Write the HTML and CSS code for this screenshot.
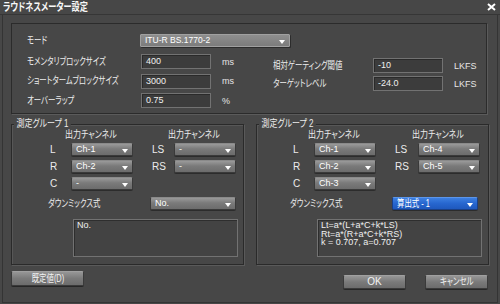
FILE: index.html
```html
<!DOCTYPE html>
<html lang="ja">
<head>
<meta charset="utf-8">
<title>ラウドネスメーター設定</title>
<link rel="stylesheet" href="styles.css">
</head>
<body>
<div class="window">
  <div class="titlebar">
    <span class="title jp">ラウドネスメーター設定</span>
    <svg class="close" width="9" height="8" viewBox="0 0 9 8"><path d="M1 1 L8 7 M8 1 L1 7" stroke="#ffffff" stroke-width="2" fill="none"/></svg>
  </div>
  <div class="body">
    <div class="top">
      <div class="mode-row">
        <span class="lbl mode-lbl"><span class="jp">モード</span></span>
        <div class="select mode-select"><span>ITU-R BS.1770-2</span><i class="caret"></i></div>
      </div>
      <div class="cols">
        <div class="col-left">
          <div class="field-row"><span class="lbl left-lbl"><span class="jp">モメンタリブロックサイズ</span></span><div class="input">400</div><span class="unit">ms</span></div>
          <div class="field-row"><span class="lbl left-lbl"><span class="jp">ショートタームブロックサイズ</span></span><div class="input">3000</div><span class="unit">ms</span></div>
          <div class="field-row"><span class="lbl left-lbl"><span class="jp">オーバーラップ</span></span><div class="input">0.75</div><span class="unit">%</span></div>
        </div>
        <div class="col-right">
          <div class="field-row"><span class="lbl right-lbl"><span class="jp">相対ゲーティング閾値</span></span><div class="input">-10</div><span class="unit">LKFS</span></div>
          <div class="field-row"><span class="lbl right-lbl"><span class="jp">ターゲットレベル</span></span><div class="input">-24.0</div><span class="unit">LKFS</span></div>
        </div>
      </div>
    </div>

    <div class="groups">
      <div class="group">
        <span class="group-title">測定グループ 1</span>
        <div class="chgrid">
          <span class="hdr hdr1"><span class="jp jpk">出力チャンネル</span></span>
          <span class="hdr hdr2"><span class="jp jpk">出力チャンネル</span></span>
          <span class="ch">L</span><div class="select"><span>Ch-1</span><i class="caret"></i></div>
          <span></span>
          <span class="ch">LS</span><div class="select"><span>-</span><i class="caret"></i></div>
          <span class="ch">R</span><div class="select"><span>Ch-2</span><i class="caret"></i></div>
          <span></span>
          <span class="ch">RS</span><div class="select"><span>-</span><i class="caret"></i></div>
          <span class="ch">C</span><div class="select"><span>-</span><i class="caret"></i></div>
        </div>
        <div class="downmix">
          <span class="lbl dm-lbl"><span class="jp">ダウンミックス式</span></span>
          <div class="select dm-select"><span>No.</span><i class="caret"></i></div>
        </div>
        <div class="textbox">No.</div>
      </div>

      <div class="group group2">
        <span class="group-title">測定グループ 2</span>
        <div class="chgrid">
          <span class="hdr hdr1"><span class="jp jpk">出力チャンネル</span></span>
          <span class="hdr hdr2"><span class="jp jpk">出力チャンネル</span></span>
          <span class="ch">L</span><div class="select"><span>Ch-1</span><i class="caret"></i></div>
          <span></span>
          <span class="ch">LS</span><div class="select"><span>Ch-4</span><i class="caret"></i></div>
          <span class="ch">R</span><div class="select"><span>Ch-2</span><i class="caret"></i></div>
          <span></span>
          <span class="ch">RS</span><div class="select"><span>Ch-5</span><i class="caret"></i></div>
          <span class="ch">C</span><div class="select"><span>Ch-3</span><i class="caret"></i></div>
        </div>
        <div class="downmix">
          <span class="lbl dm-lbl"><span class="jp">ダウンミックス式</span></span>
          <div class="select dm-select blue"><span class="jp">算出式 - 1</span><i class="caret"></i></div>
        </div>
        <div class="textbox">Lt=a*(L+a*C+k*LS)<br>Rt=a*(R+a*C+k*RS)<br>k = 0.707, a=0.707</div>
      </div>
    </div>

    <div class="footer">
      <div class="btn btn-default"><span class="jp jpc">既定値(D)</span></div>
      <div class="btn btn-ok">OK</div>
      <div class="btn btn-cancel"><span class="jp jpc">キャンセル</span></div>
    </div>
  </div>
</div>
</body>
</html>
```

FILE: styles.css
```css
* { box-sizing: border-box; }
html, body { margin: 0; padding: 0; }
body {
  width: 500px;
  height: 304px;
  overflow: hidden;
  background: #474747;
  font-family: "Liberation Sans", "Noto Sans CJK JP", sans-serif;
  font-size: 10px;
  color: #ececec;
  font-feature-settings: "palt";
}
.jp {
  display: inline-block;
  white-space: nowrap;
  transform: scaleX(0.74);
  transform-origin: 0 50%;
}
.jpk { transform: scaleX(0.8); }
.jpc { transform-origin: 50% 50%; }

.window { height: 304px; display: flex; flex-direction: column; }

.titlebar {
  height: 15px;
  flex: none;
  display: flex;
  align-items: center;
  justify-content: space-between;
  padding: 0 4px 0 3px;
  border-bottom: 1px solid #363636;
}
.title { font-weight: bold; font-size: 11px; color: #f8f8f8; line-height: 14px; }
.close { display: block; }

.body {
  height: 288px;
  flex: none;
  margin: 0 2px;
  border: 1px solid #343434;
  border-top: 0;
  padding: 8px 8px 0 8px;
}

.lbl { white-space: nowrap; color: #ececec; line-height: 12px; }

.top {
  height: 91px;
  width: 476px;
  border: 1px solid #2b2b2b;
  box-shadow: 1px 1px 0 #5b5b5b;
  padding: 10px 0 0 15px;
}
.mode-row { display: flex; align-items: center; height: 13px; }
.mode-lbl { width: 113px; }
.mode-select { width: 150px; }

.cols { display: flex; margin-top: 7px; }
.col-left { width: 246px; display: flex; flex-direction: column; gap: 4.5px; }
.col-right { margin-top: 4px; display: flex; flex-direction: column; gap: 3px; }
.field-row { display: flex; align-items: center; height: 15px; }
.left-lbl { width: 114px; }
.right-lbl { width: 100px; }
.unit { margin-left: 11px; font-size: 9px; color: #e6e6e6; }

.input {
  width: 70px;
  height: 15px;
  background: #3c3c3c;
  border: 1px solid #727272;
  box-shadow: inset 1px 1px 0 #2a2a2a;
  padding: 0 4px;
  font-size: 9px;
  line-height: 13px;
  color: #f0f0f0;
}

.select {
  position: relative;
  height: 13px;
  border-radius: 2px;
  background: linear-gradient(#9a9a9a, #7a7a7a 45%, #6c6c6c);
  border: 1px solid #3a3a3a;
  border-top-color: #8a8a8a;
  box-shadow: 0 1px 0 #2c2c2c;
  padding: 0 12px 0 4px;
  font-size: 9px;
  line-height: 11px;
  color: #ffffff;
  white-space: nowrap;
  overflow: hidden;
}
.select .jp { font-size: 10px; }
.mode-select {
  background: linear-gradient(#8e8e8e, #7c7c7c);
  border: 1px solid #a0a0a0;
  border-radius: 1px;
  box-shadow: 1px 1px 0 #2c2c2c;
  font-size: 8.5px;
}
.select.blue {
  background: linear-gradient(#3c7fe0, #2766cf 50%, #1f58bd);
  border-color: #1a3f86;
  border-top-color: #5b95ea;
}
.caret {
  position: absolute;
  right: 4px;
  top: 5px;
  width: 0;
  height: 0;
  border-left: 3.5px solid transparent;
  border-right: 3.5px solid transparent;
  border-top: 4px solid #ffffff;
}

.groups { display: flex; gap: 12px; margin-top: 10px; }
.group {
  width: 233px;
  height: 141px;
  border: 1px solid #2a2a2a;
  box-shadow: 1px 1px 0 #5a5a5a, inset 1px 1px 0 #575757;
}
.group-title {
  display: block;
  width: max-content;
  height: 12px;
  line-height: 12px;
  margin: -7px 0 0 2px;
  padding: 0 3px;
  background: #474747;
  color: #ececec;
  transform: scaleX(0.8);
  transform-origin: 0 50%;
}

.chgrid {
  display: grid;
  grid-template-columns: 21px 62px 19px 22px 62px;
  grid-template-rows: 9px 13px 13px 13px;
  row-gap: 4px;
  padding-left: 38px;
}
.group2 .chgrid { padding-left: 36px; grid-template-columns: 21px 62px 19px 23px 62px; }
.hdr { white-space: nowrap; line-height: 9px; margin-left: -6px; }
.hdr1 { grid-column: 2 / 4; }
.hdr2 { grid-column: 5 / 6; }
.ch { align-self: center; line-height: 12px; font-size: 10px; }

.downmix { display: flex; align-items: center; margin-top: 7px; padding-left: 36px; }
.group2 .downmix { padding-left: 33px; }
.dm-lbl { width: 102px; }
.dm-select { width: 86px; }

.textbox {
  margin: 9px 0 0 61px;
  width: 165px;
  height: 38px;
  background: #434343;
  border: 1px solid #727272;
  box-shadow: inset 1px 1px 0 #2e2e2e;
  padding: 1px 3px;
  font-size: 9px;
  line-height: 8.5px;
  color: #f0f0f0;
}
.group2 .textbox { margin-left: 60px; }

.footer { display: flex; align-items: flex-start; margin-top: 6px; }
.btn {
  height: 14px;
  border-radius: 2px;
  background: linear-gradient(#969696, #7a7a7a 50%, #6c6c6c);
  border: 1px solid #3a3a3a;
  border-top-color: #a0a0a0;
  box-shadow: 0 1px 0 #262626;
  text-align: center;
  font-size: 10px;
  line-height: 12px;
  color: #f2f2f2;
}
.btn-default { width: 73px; height: 15px; line-height: 13px; }
.btn-ok { width: 63px; margin-left: auto; margin-top: 4px; }
.btn-cancel { width: 63px; margin-left: 19px; margin-right: 1px; margin-top: 4px; }
```
